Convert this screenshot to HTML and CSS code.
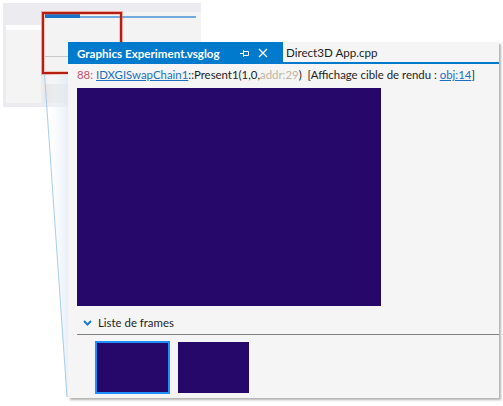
FILE: index.html
```html
<!DOCTYPE html>
<html lang="fr">
<head>
<meta charset="utf-8">
<title>Graphics Experiment.vsglog</title>
<link rel="stylesheet" href="styles.css">
</head>
<body>
<div class="stage">
  <div class="mini">
    <div class="mini-left"><div class="mini-left-head"></div></div>
    <div class="mini-right">
      <div class="mini-tabs"><span class="mini-tab"></span><span class="mini-tabline"></span></div>
      <div class="mini-body"><div class="mini-sep"></div></div>
      <div class="mini-bottom"></div>
    </div>
  </div>
  <div class="highlight"></div>
  <svg class="callout" width="503" height="406" viewBox="0 0 503 406">
    <defs>
      <linearGradient id="cg" x1="0" y1="0" x2="1" y2="0">
        <stop offset="0" stop-color="#ffffff" stop-opacity="0"/>
        <stop offset="1" stop-color="#dbe8f5" stop-opacity="0.8"/>
      </linearGradient>
    </defs>
    <polygon points="44.5,74 70,74 70,397 67,397" fill="url(#cg)"/>
    <line x1="44.5" y1="74" x2="67" y2="397" stroke="#a9cde9" stroke-width="1"/>
  </svg>
  <div class="win">
    <div class="tabs">
      <div class="tab active">
        <span class="tab-title">Graphics Experiment.vsglog</span>
        <svg class="pin" width="9" height="9" viewBox="0 0 9 9"><path d="M0 4.5H3M3.5 1V8M3.5 2.5H8.5V6.5H3.5" fill="none" stroke="#fff" stroke-width="1"/></svg>
        <svg class="close" width="10" height="10" viewBox="0 0 10 10"><path d="M1 1L9 9M9 1L1 9" stroke="#fff" stroke-width="1.3"/></svg>
      </div>
      <div class="tab">Direct3D App.cpp</div>
    </div>
    <div class="call">
      <span class="num">88:</span> <a class="link">IDXGISwapChain1</a>::Present1(1,0,<span class="dim">addr:29</span>)&nbsp; [Affichage cible de rendu : <a class="link">obj:14</a>]
    </div>
    <div class="render"></div>
    <div class="frames-head">
      <svg class="chev" width="9" height="6" viewBox="0 0 9 6"><path d="M1 1L4.5 4.5L8 1" fill="none" stroke="#1c79d1" stroke-width="2"/></svg>
      <span>Liste de frames</span>
    </div>
    <div class="frames">
      <div class="frame selected"></div>
      <div class="frame"></div>
    </div>
  </div>
</div>
</body>
</html>
```
FILE: styles.css
```css
* { box-sizing: border-box; }
html, body { margin: 0; padding: 0; background: #ffffff; }
body { font-family: "Lato", "Noto Sans", sans-serif; }
.stage { position: relative; width: 503px; height: 406px; overflow: hidden; }

.mini {
  position: absolute; left: 3px; top: 3px; width: 198px; height: 104px;
  background: #ececf0; display: flex; padding: 9px 0 4px 3px; gap: 3px;
}
.mini-left {
  width: 35px; margin-top: 13px; background: #f4f4f5;
}
.mini-left-head { height: 5px; background: #ffffff; }
.mini-right { flex: 1; display: flex; flex-direction: column; background: #f3f3f4; }
.mini-tabs { display: flex; align-items: flex-end; height: 6px; padding: 1px 5px 0 1px; }
.mini-tab { width: 35px; height: 4px; background: #1574c9; }
.mini-tabline { flex: 1; height: 2px; background: #6fa9de; }
.mini-body { height: 66px; padding-top: 38px; }
.mini-sep { height: 1px; background: #c8c8c8; margin-left: 1px; }
.mini-bottom { flex: 1; background: #e6e6e7; }

.highlight {
  position: absolute; left: 42px; top: 12px; width: 80px; height: 62px;
  border: 2px solid #b51e12; box-shadow: 0 0 0 1px rgba(240,110,90,0.55), inset 0 0 0 1px rgba(240,110,90,0.35);
}
.callout { position: absolute; left: 0; top: 0; }

.win {
  position: absolute; left: 68px; top: 42px; width: 431px; height: 356px;
  background: #f5f5f5; box-shadow: 2px 2px 2px rgba(0,0,0,0.3);
  display: flex; flex-direction: column;
  font-size: 11.4px; color: #1e1e1e;
}
.tabs { display: flex; height: 22px; border-bottom: 2px solid #007acc; }
.tab { display: flex; align-items: center; height: 20px; padding-left: 3px; color: #1e1e1e; white-space: nowrap; font-size: 11.6px; }
.tab.active { width: 215px; height: 22px; margin-bottom: -2px; padding-left: 9px; background: #007acc; color: #fff; font-weight: 700; font-size: 11.6px; }
.tab-title { flex: 1; }
.pin { margin-right: 9px; }
.close { margin-right: 15px; }

.call { height: 24px; line-height: 20px; padding: 1px 0 0 9px; white-space: nowrap; }
.num { color: #c3526a; }
.link { color: #1a6fc4; text-decoration: underline; }
.dim { color: #bdb6a4; }

.render { width: 304px; height: 218px; margin-left: 9px; background: #25086a; flex: none; }

.frames-head {
  display: flex; align-items: center; gap: 6px; height: 29px; margin-left: 9px;
  padding: 9px 0 4px 6px; border-bottom: 1px solid #808080; line-height: 16px;
}
.chev { flex: none; }
.frames { display: flex; align-items: center; gap: 8px; padding: 6px 0 0 27px; }
.frame { width: 71px; height: 51px; background: #25086a; }
.frame.selected { width: 75px; height: 53px; border: 2px solid #1e8ffc; }
```
